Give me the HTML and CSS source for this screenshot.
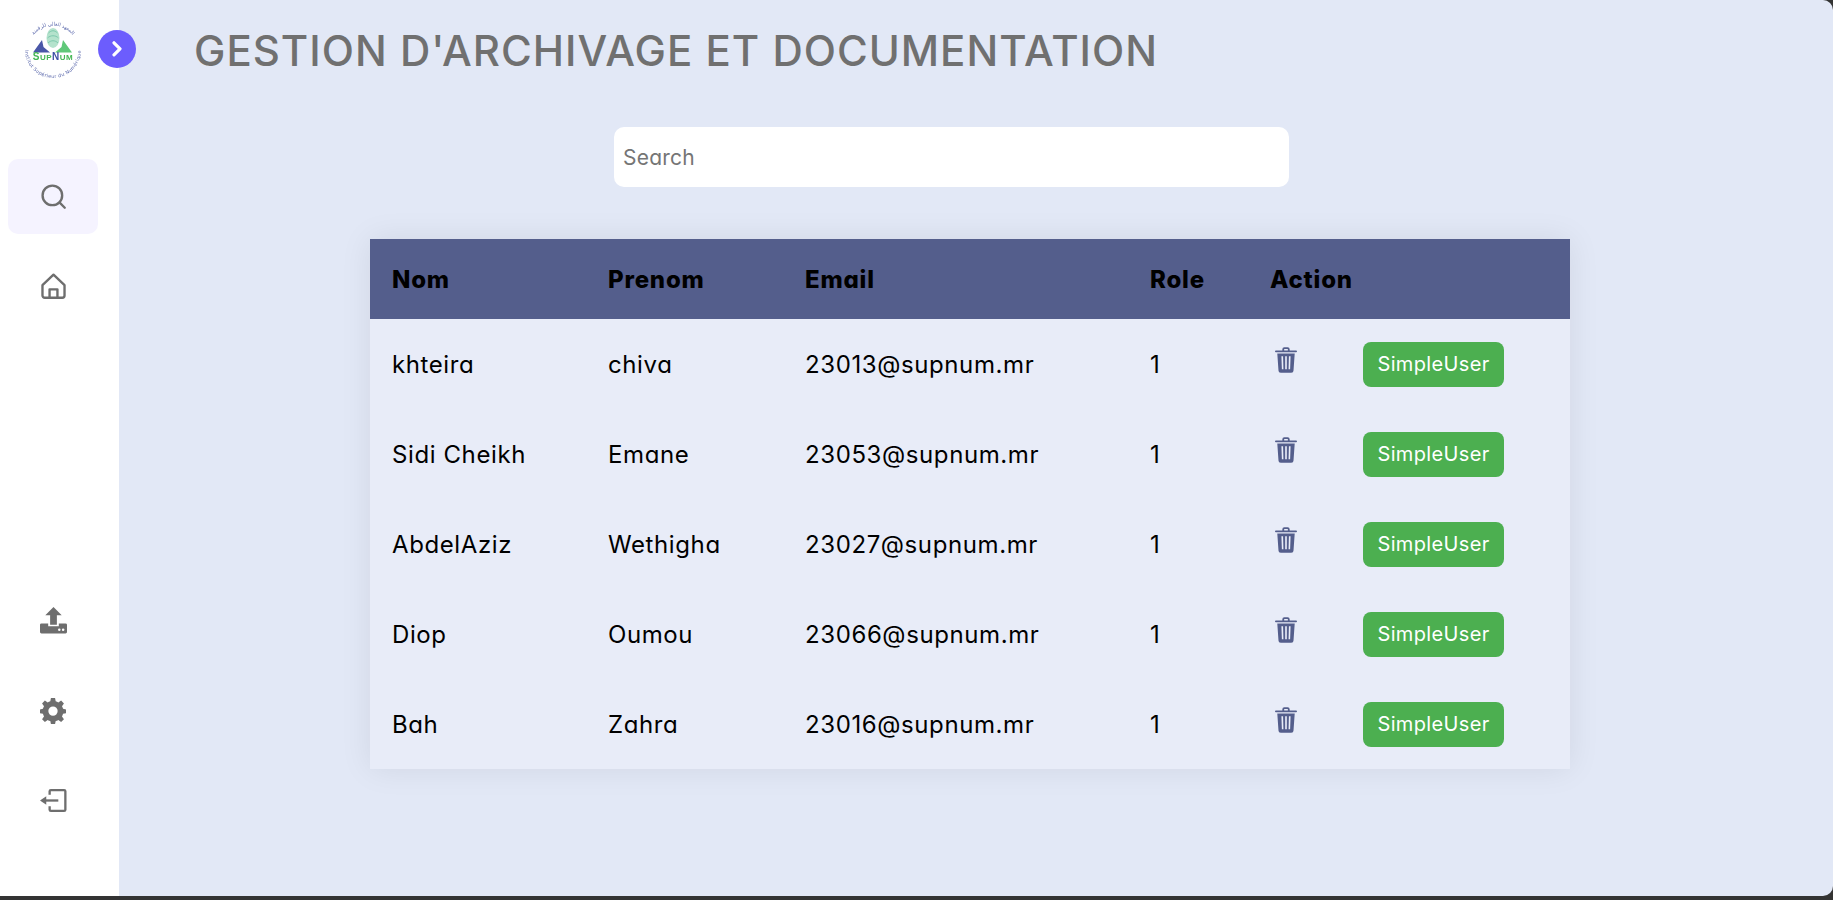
FILE: index.html
```html
<!DOCTYPE html>
<html lang="fr">
<head>
<meta charset="utf-8">
<title>Gestion d'archivage et documentation</title>
<link rel="stylesheet" href="styles.css">
</head>
<body>
<svg class="defs" aria-hidden="true">
  <symbol id="trash" viewBox="0 0 24 28"><path fill-rule="evenodd" d="M8 3.500V2.200A2.200 2.200 0 0 1 10.200 0h3.600A2.200 2.200 0 0 1 16 2.200V3.500h7a1 1 0 0 1 0 2H1a1 1 0 0 1 0-2ZM10 3.500h4V2h-4ZM2.500 7h19l-1.300 18.500A2.500 2.500 0 0 1 17.700 28H6.300a2.500 2.500 0 0 1-2.500-2.500ZM7 10l.5 14h1.700L8.800 10ZM11.100 10v14h1.800V10ZM15.200 10l-.4 14h1.700l.5-14Z"/></symbol>
</svg>
<div class="window">
  <aside class="sidebar">
    <div class="logo-row">
      <svg class="logo" viewBox="0 0 60 60" aria-hidden="true">
        <defs>
          <path id="ring-top" d="M5.500 30a24.500 24.500 0 0 1 49 0"/>
          <path id="ring-bottom" d="M2 30a28 28 0 0 0 56 0"/>
        </defs>
        <text class="ring-text ring-ar"><textPath href="#ring-top" startOffset="50%" text-anchor="middle">المعهد العالي للرقمنة</textPath></text>
        <text class="ring-text ring-fr"><textPath href="#ring-bottom" startOffset="50%" text-anchor="middle">Institut Supérieur du Numérique</textPath></text>
        <ellipse cx="30" cy="18" rx="6.500" ry="10" fill="#b4e2cc"/>
        <path d="M25.500 13c3-3 6-3 9 0M24.500 18c3-3 8-3 11 0M25 23c3-3 7-3 10 0" fill="none" stroke="#6fc1a4" stroke-width=".8"/>
        <path d="M10 32.500 19 20 20.500 27 27 32.500Z" fill="#4a57a8"/>
        <path d="M49 32.500 40 20 38.500 27 32 32.500Z" fill="#5fc878"/>
        <text class="logo-name" x="30" y="40" text-anchor="middle"><tspan class="green">S</tspan><tspan class="green small">UP</tspan><tspan class="blue">N</tspan><tspan class="green small">UM</tspan></text>
      </svg>
    </div>
    <nav class="nav">
      <a class="nav-item active"><svg class="icon" viewBox="0 0 24 24" fill="none" stroke="#6e6e6e" stroke-width="2.100" stroke-linecap="round"><circle cx="11" cy="11" r="8.700"/><path d="M17.500 17.500 22 22"/></svg></a>
      <a class="nav-item"><svg class="icon" viewBox="0 0 24 24" fill="none" stroke="#6e6e6e" stroke-width="2.100" stroke-linejoin="round"><path d="M12 1.500 2.200 10.800V20a2 2 0 0 0 2 2h15.600a2 2 0 0 0 2-2v-9.200Z"/><path d="M8.500 22v-7.500h7V22"/></svg></a>
    </nav>
    <nav class="nav nav-bottom">
      <a class="nav-item"><svg class="icon" viewBox="0 0 28 28" fill="#6e6e6e"><path d="M14 0 22.500 8.500H17.500V18.500H10.500V8.500H5.500Z"/><path d="M0 18.500a1.500 1.500 0 0 1 1.500-1.500H8.500V20H19.500V17H26.500A1.500 1.500 0 0 1 28 18.500V26A1.500 1.500 0 0 1 26.500 27.500H1.500A1.500 1.500 0 0 1 0 26Z"/><circle cx="20" cy="23.500" r="1.300" fill="#fff"/><circle cx="24" cy="23.500" r="1.300" fill="#fff"/></svg></a>
      <a class="nav-item"><svg class="icon gear" viewBox="0 0 24 24" fill="#6e6e6e"><path fill-rule="evenodd" d="M13.900 0h-3.800l-.6 3.100a9 9 0 0 0-2.400 1L4.500 2.300 1.900 5l1.800 2.600a9 9 0 0 0-1 2.400L0 10.500v3.600l2.700.5a9 9 0 0 0 1 2.400L1.900 19.500l2.600 2.600 2.600-1.800a9 9 0 0 0 2.400 1l.6 2.700h3.800l.6-2.700a9 9 0 0 0 2.400-1l2.600 1.800 2.600-2.600-1.800-2.500a9 9 0 0 0 1-2.400l2.700-.5v-3.600l-2.700-.5a9 9 0 0 0-1-2.400L22.100 5l-2.600-2.700-2.600 1.800a9 9 0 0 0-2.400-1ZM12 7.800a4.300 4.300 0 1 1 0 8.600 4.300 4.300 0 0 1 0-8.600Z"/></svg></a>
      <a class="nav-item"><svg class="icon" viewBox="0 0 28 24" fill="none" stroke="#6e6e6e" stroke-width="2.400"><path d="M10 6V2.500A1.300 1.300 0 0 1 11.300 1.200H25A1.300 1.300 0 0 1 26.300 2.500V21.500A1.300 1.300 0 0 1 25 22.800H11.300A1.300 1.300 0 0 1 10 21.500V18"/><path d="M5 12H19"/><path d="M0 12 6.500 7.500V16.500Z" fill="#6e6e6e" stroke="none"/></svg></a>
    </nav>
  </aside>
  <button class="toggle" aria-label="Ouvrir"><svg viewBox="0 0 16 16" fill="none" stroke="#fff" stroke-width="3.200" stroke-linecap="round" stroke-linejoin="round"><path d="M5 1.800 11 7.800 5 13.800"/></svg></button>
  <main class="main">
    <h1 class="title">GESTION D'ARCHIVAGE ET DOCUMENTATION</h1>
    <div class="search-wrap"><input class="search" type="text" placeholder="Search"></div>
    <div class="table-wrap">
      <table class="users">
        <colgroup><col class="c-nom"><col class="c-prenom"><col class="c-email"><col class="c-role"><col class="c-trash-col"><col class="c-badge-col"></colgroup>
        <thead>
          <tr><th>Nom</th><th>Prenom</th><th>Email</th><th>Role</th><th colspan="2">Action</th></tr>
        </thead>
        <tbody>
          <tr><td>khteira</td><td>chiva</td><td>23013@supnum.mr</td><td>1</td><td class="c-trash"><svg class="trash"><use href="#trash"/></svg></td><td class="c-badge"><span class="badge">SimpleUser</span></td></tr>
          <tr><td>Sidi Cheikh</td><td>Emane</td><td>23053@supnum.mr</td><td>1</td><td class="c-trash"><svg class="trash"><use href="#trash"/></svg></td><td class="c-badge"><span class="badge">SimpleUser</span></td></tr>
          <tr><td>AbdelAziz</td><td>Wethigha</td><td>23027@supnum.mr</td><td>1</td><td class="c-trash"><svg class="trash"><use href="#trash"/></svg></td><td class="c-badge"><span class="badge">SimpleUser</span></td></tr>
          <tr><td>Diop</td><td>Oumou</td><td>23066@supnum.mr</td><td>1</td><td class="c-trash"><svg class="trash"><use href="#trash"/></svg></td><td class="c-badge"><span class="badge">SimpleUser</span></td></tr>
          <tr><td>Bah</td><td>Zahra</td><td>23016@supnum.mr</td><td>1</td><td class="c-trash"><svg class="trash"><use href="#trash"/></svg></td><td class="c-badge"><span class="badge">SimpleUser</span></td></tr>
        </tbody>
      </table>
    </div>
  </main>
</div>
</body>
</html>
```
FILE: styles.css
```css
* { box-sizing: border-box; }
html, body { margin: 0; height: 100%; background: #333; overflow: hidden; }
body { font-family: "Inter", "Liberation Sans", sans-serif; font-feature-settings: "cv11"; }
.defs { display: none; }
.window { position: relative; display: flex; width: 1833px; height: 896px; background: #e2e8f6; border-radius: 0 10px 10px 0; overflow: hidden; }
.sidebar { width: 119px; flex: none; background: #fff; display: flex; flex-direction: column; }
.logo-row { height: 159px; padding: 20px 0 0 23px; }
.logo { display: block; width: 60px; height: 60px; overflow: visible; filter: blur(.25px); }
.ring-text { font-family: "DejaVu Sans", sans-serif; font-weight: 400; fill: #5f6cae; }
.ring-ar { font-size: 5px; }
.ring-fr { font-size: 4.800px; letter-spacing: .3px; }
.logo-name { font: 700 10px "Liberation Sans", sans-serif; letter-spacing: .5px; }
.logo-name .small { font-size: 8px; }
.green { fill: #43b653; }
.blue { fill: #3f4fa5; }
.nav { display: flex; flex-direction: column; gap: 15px; padding-left: 8px; }
.nav-bottom { margin-top: auto; padding-bottom: 58px; }
.nav-item { width: 90px; height: 75px; display: flex; align-items: center; justify-content: center; border-radius: 10px; }
.nav-item.active { background: #f5f3ff; }
.icon { width: 27px; height: 27px; }
.icon.gear { width: 26px; height: 26px; }
.toggle { position: absolute; left: 98px; top: 30px; width: 38px; height: 38px; border: 0; padding: 11px; border-radius: 50%; background: #6c5dfd; }
.toggle svg { display: block; width: 16px; height: 16px; }
.main { flex: 1; padding: 0 144px 0 75px; display: flex; flex-direction: column; }
.title { margin: 22px 0 0; height: 58px; color: #707070; font-size: 42px; line-height: 58px; font-weight: 500; letter-spacing: 1px; white-space: nowrap; }
.search-wrap { margin-top: 47px; padding-left: 420px; }
.search { display: block; width: 675px; height: 60px; border: 0; border-radius: 10px; background: #fff; padding: 0 9px; font: 400 21px "Inter", sans-serif; font-feature-settings: "cv11"; letter-spacing: .23px; color: #333; outline: none; }
.search::placeholder { color: #757575; opacity: 1; }
.table-wrap { margin-top: 52px; margin-left: 176px; width: 1200px; box-shadow: 0 0 30px rgba(0,0,0,.08); }
.users { width: 1200px; table-layout: fixed; border-collapse: collapse; background: #e8ecf8; color: #000; font-size: 24px; letter-spacing: .6px; }
.users th { height: 80px; background: #545e8c; text-align: left; padding: 1px 0 0 22px; font-weight: 800; letter-spacing: .8px; }
.users td { height: 90px; padding: 0 0 0 22px; font-weight: 400; }
.c-nom { width: 216px; }
.c-prenom { width: 197px; }
.c-email { width: 345px; }
.c-role { width: 120px; }
.c-trash-col { width: 115px; }
.c-badge-col { width: 207px; }
.users td.c-trash { padding: 0 0 8px 27px; }
.users td.c-badge { padding: 0; }
.trash { display: block; width: 22px; height: 26px; fill: #545e8c; }
.badge { display: block; width: 141px; height: 45px; line-height: 45px; text-align: center; background: #4caf50; color: #fff; border-radius: 8px; font-size: 20px; letter-spacing: .35px; }
```
